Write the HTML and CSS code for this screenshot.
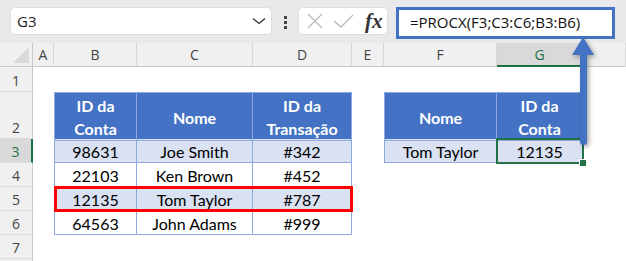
FILE: index.html
```html
<!DOCTYPE html>
<html lang="pt">
<head>
  <meta charset="UTF-8">
  <meta name="viewport" content="width=device-width, initial-scale=1.0">
  <title>PROCX</title>
  <link rel="stylesheet" href="styles.css">
</head>
<body>
  <div class="toolbar">
    <div class="namebox">
      <span>G3</span>
      <svg class="chev" width="14" height="8" viewBox="0 0 14 8"><path d="M1 1.5L7 6.5L13 1.5" fill="none" stroke="#333" stroke-width="1.3"/></svg>
    </div>
    <div class="dots"><i></i><i></i><i></i></div>
    <div class="fxbox">
      <svg width="16" height="16" viewBox="0 0 16 16"><path d="M1 1L15 15M15 1L1 15" stroke="#b8b8b8" stroke-width="1.3" fill="none"/></svg>
      <svg class="ok" width="21" height="14" viewBox="0 0 21 14"><path d="M1 7L8 13L20 1" stroke="#b8b8b8" stroke-width="1.3" fill="none"/></svg>
      <span class="fx">fx</span>
    </div>
    <div class="formula">=PROCX(F3;C3:C6;B3:B6)</div>
  </div>

  <div class="sheet">
    <div class="corner"></div>
    <div class="ch">A</div>
    <div class="ch">B</div>
    <div class="ch">C</div>
    <div class="ch">D</div>
    <div class="ch">E</div>
    <div class="ch">F</div>
    <div class="ch sel">G</div>
    <div class="ch"></div>

    <div class="rh">1</div>
    <div class="rh">2</div>
    <div class="rh sel">3</div>
    <div class="rh">4</div>
    <div class="rh">5</div>
    <div class="rh">6</div>
    <div class="rh">7</div>
    <div class="rh"></div>

    <div class="tbl left">
      <div class="tr head">
        <div class="td">ID da<br>Conta</div>
        <div class="td">Nome</div>
        <div class="td">ID da<br>Transação</div>
      </div>
      <div class="tr band">
        <div class="td">98631</div>
        <div class="td">Joe Smith</div>
        <div class="td">#342</div>
      </div>
      <div class="tr">
        <div class="td">22103</div>
        <div class="td">Ken Brown</div>
        <div class="td">#452</div>
      </div>
      <div class="tr band hl">
        <div class="td">12135</div>
        <div class="td">Tom Taylor</div>
        <div class="td">#787</div>
      </div>
      <div class="tr">
        <div class="td">64563</div>
        <div class="td">John Adams</div>
        <div class="td">#999</div>
      </div>
    </div>

    <div class="tbl right">
      <div class="tr head">
        <div class="td">Nome</div>
        <div class="td">ID da<br>Conta</div>
      </div>
      <div class="tr band">
        <div class="td">Tom Taylor</div>
        <div class="td cur">12135</div>
      </div>
    </div>
  </div>

  <svg class="arrow" width="30" height="116" viewBox="0 0 30 116">
    <path d="M15 2L26 20L19 20L19 106.5A3.5 3.5 0 0 1 12 106.5L12 20L4 20Z" fill="#4472c4"/>
  </svg>
</body>
</html>
```

FILE: styles.css
```css
* {
  box-sizing: border-box;
}
body {
  margin: 0;
  width: 626px;
  height: 261px;
  overflow: hidden;
  position: relative;
  background: #fff;
  font-family: "Open Sans", sans-serif;
}

/* formula bar */
.toolbar {
  height: 43px;
  background: #e9e9ec;
  display: flex;
  align-items: flex-start;
  padding: 7px 0 0 10px;
}
.namebox {
  width: 262px;
  height: 28px;
  background: #fff;
  border: 1px solid #dddde0;
  border-radius: 5px;
  display: flex;
  align-items: center;
  justify-content: space-between;
  padding: 0 5px 0 6px;
  font-size: 15px;
  color: #222;
}
.dots {
  width: 26px;
  display: flex;
  flex-direction: column;
  align-items: center;
  gap: 2px;
  padding-top: 9px;
}
.dots i {
  display: block;
  width: 3px;
  height: 3px;
  background: #444;
}
.fxbox {
  width: 90px;
  height: 28px;
  background: #fff;
  border: 1px solid #dddde0;
  border-radius: 5px;
  display: flex;
  align-items: center;
  padding-left: 8px;
}
.fxbox .ok {
  margin-left: 10px;
}
.fx {
  margin-left: 11px;
  font-family: "Liberation Serif", serif;
  font-style: italic;
  font-weight: 700;
  font-size: 21px;
  color: #333;
  line-height: 1;
}
.formula {
  margin-left: 8px;
  width: 219px;
  height: 32px;
  border: 3px solid #4472c4;
  background: #fff;
  padding-left: 11px;
  font-size: 15px;
  line-height: 25px;
  color: #111;
}

/* sheet */
.sheet {
  display: grid;
  grid-template-columns: 33px 21px 83px 116px 99px 32px 113px 86px 1fr;
  grid-template-rows: 24px 25px 47px repeat(6, 24px);
  font-size: 14px;
  color: #444;
}
.corner {
  background: #f0f0f0;
  border-right: 1px solid #c8c8c8;
  border-bottom: 1px solid #c8c8c8;
  position: relative;
}
.corner::after {
  content: "";
  position: absolute;
  right: 3px;
  bottom: 3px;
  width: 16px;
  height: 16px;
  background: #dadada;
  clip-path: polygon(100% 0, 100% 100%, 0 100%);
}
.ch {
  background: #f0f0f0;
  border-right: 1px solid #d8d8d8;
  border-bottom: 1px solid #c8c8c8;
  display: flex;
  align-items: center;
  justify-content: center;
}
.ch.sel {
  background: #d9d9d9;
  color: #1e7145;
  border-bottom: 2px solid #1e7145;
}
.rh {
  grid-column: 1;
  background: #f0f0f0;
  border-right: 1px solid #c8c8c8;
  border-bottom: 1px solid #dcdcdc;
  display: flex;
  align-items: flex-end;
  justify-content: center;
  padding-bottom: 1px;
}
.rh.sel {
  background: #d9d9d9;
  color: #1e7145;
  border-right: 2px solid #1e7145;
}

/* tables */
.tbl {
  border-left: 1px solid #8ea9db;
  border-top: 1px solid #8ea9db;
  font-family: Lato, sans-serif;
  font-size: 16px;
  color: #000;
}
.left {
  grid-column: 3 / 6;
  grid-row: 3 / 8;
}
.right {
  grid-column: 7 / 9;
  grid-row: 3 / 5;
}
.tr {
  display: grid;
  height: 24px;
}
.left .tr {
  grid-template-columns: 82px 116px 99px;
}
.right .tr {
  grid-template-columns: 112px 86px;
}
.tr.head {
  height: 46px;
  background: #4472c4;
  color: #fff;
  font-weight: 700;
  line-height: 23px;
}
.tr.band {
  background: #d9e1f2;
}
.tr.hl {
  position: relative;
  outline: 3px solid #ff0000;
  outline-offset: -2px;
}
.td {
  border-right: 1px solid #8ea9db;
  border-bottom: 1px solid #8ea9db;
  display: flex;
  align-items: center;
  justify-content: center;
  text-align: center;
  padding-top: 1px;
}
.td.cur {
  position: relative;
  outline: 2px solid #217346;
  outline-offset: -1px;
}
.td.cur::after {
  content: "";
  position: absolute;
  right: -4px;
  bottom: -4px;
  width: 6px;
  height: 6px;
  background: #217346;
  border-left: 1px solid #fff;
  border-top: 1px solid #fff;
}

.arrow {
  position: absolute;
  left: 568px;
  top: 35px;
  filter: drop-shadow(2px 2px 2px rgba(0, 0, 0, 0.35));
}
```
